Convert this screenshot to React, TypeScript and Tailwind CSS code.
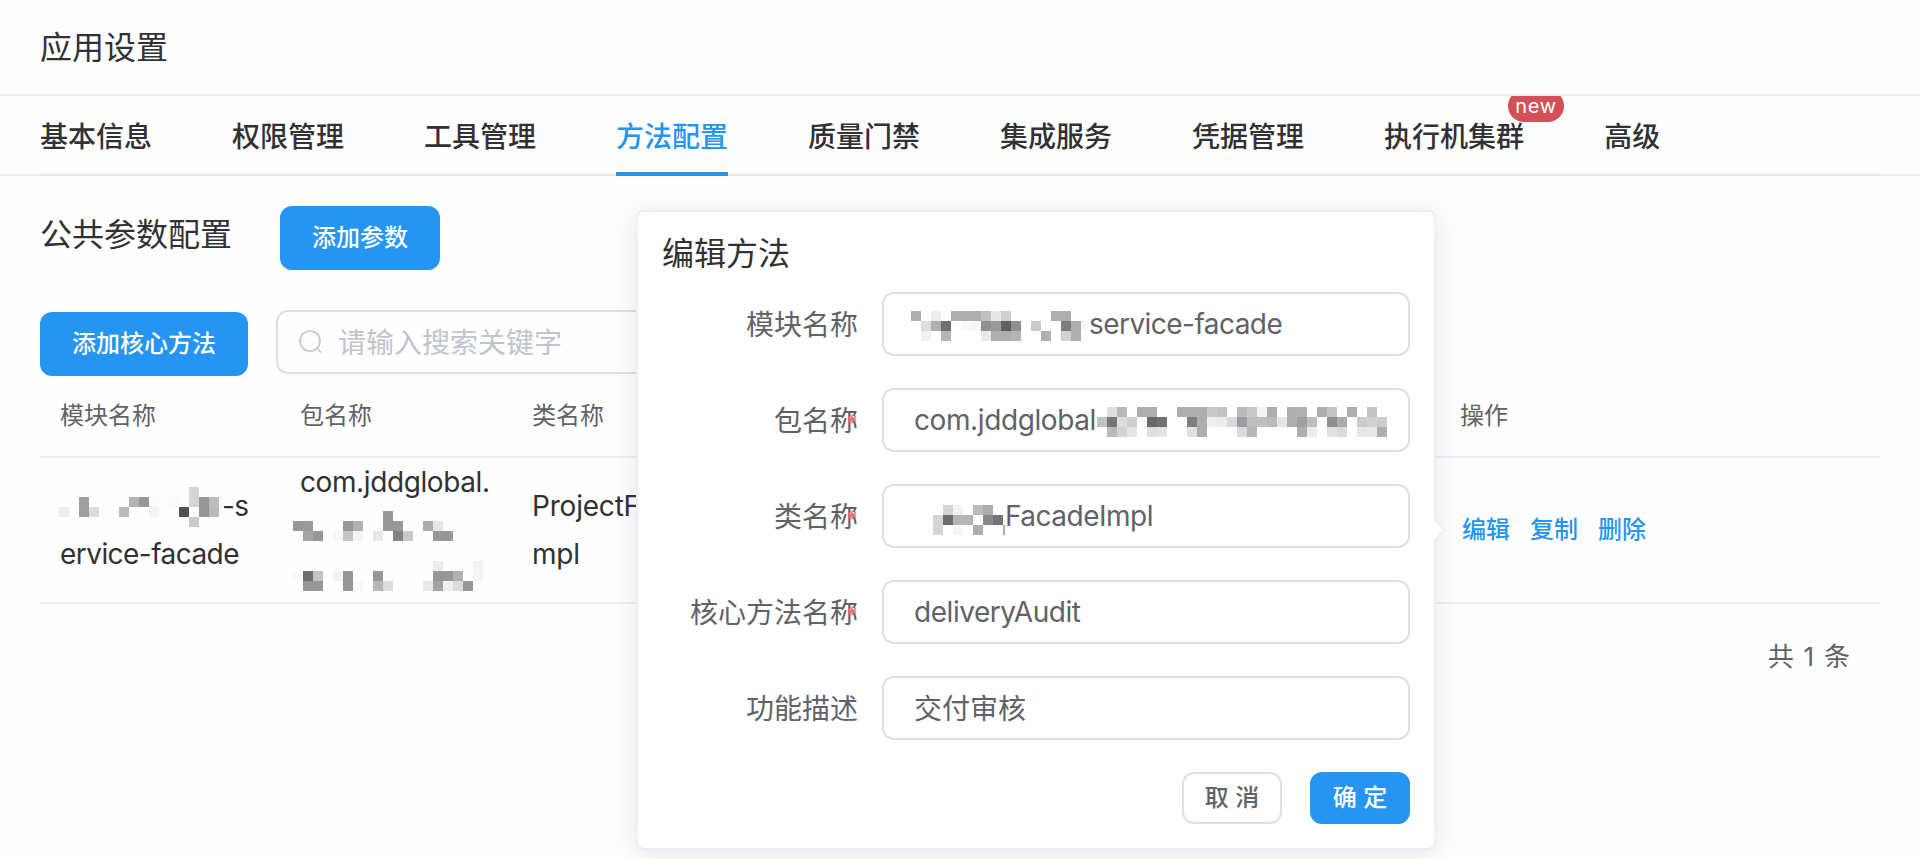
import React from "react";

type Cell = [number, string];

const G = "#aeaeb0";
const D = "#969799";

const moduleMosaic: Cell[][] = [
  [[13, "#d3d6d5"]],
  [[2, "#9fa0a2"], [7, "#b4b4b5"], [8, D], [9, "#fcfcfc"], [11, "#fafafa"], [13, "#d3d6d5"], [14, D], [15, "#bdbdbe"], [16, "#f8f8f8"]],
  [[0, "#eeeeee"], [2, "#9fa0a2"], [3, "#dcdcdd"], [6, "#b9bbba"], [9, "#f5f5f5"], [12, "#4f5052"], [14, D], [15, "#bababb"]],
  [[13, "#cbcbcb"]],
];

const packageMosaic: Cell[][] = [
  [[9, D]],
  [[0, D], [1, "#9b9b9a"], [5, D], [6, "#b1b1b2"], [9, D], [10, D], [13, "#acacad"], [14, "#e6e6e6"], [16, "#fdfdfd"]],
  [[1, "#a3a4a6"], [2, D], [4, "#f7f7f7"], [5, "#c3c3c3"], [6, "#f3f3f3"], [8, "#e8e8e8"], [10, "#808183"], [11, "#c9c9c9"], [14, D], [15, D]],
  [],
  [],
  [[14, "#ececec"], [18, "#f4f4f4"]],
  [[0, "#f9f9f9"], [1, "#6e7072"], [2, "#c4c4c5"], [4, "#f3f3f3"], [5, D], [8, D], [14, D], [15, D], [16, "#b0b0b1"], [18, "#f4f4f4"]],
  [[1, D], [2, D], [5, D], [6, "#f8f8f8"], [8, "#b7b7b8"], [9, "#dcdedd"], [13, "#eaeaea"], [14, "#a3a4a6"], [15, "#f0f0f0"], [16, "#dcdcdd"], [17, D]],
];

const moduleInputMosaic: Cell[][] = [
  [[0, G], [2, "#ecedec"], [4, G], [5, G], [6, G], [7, "#bfc0c1"], [8, "#e8e8e8"], [9, "#cecfd0"], [14, G], [15, G]],
  [[1, "#dedede"], [2, G], [3, "#6f7073"], [5, "#f9f9f9"], [6, "#f6f6f6"], [7, "#909193"], [8, "#98999b"], [9, "#5f6063"], [10, "#8e8f92"], [12, "#cacbcc"], [15, "#7c7d81"], [16, G], [17, "#f6f6f7"]],
  [[1, "#f2f2f2"], [3, "#b5b5b7"], [7, "#eaeaea"], [8, G], [9, G], [10, "#b5b5b7"], [13, G], [15, "#d0d1d3"], [16, G]],
];

const packageInputMosaic: Cell[][] = [
  [[1, "#dedede"], [2, "#b8b8ba"], [4, G], [5, G], [8, G], [9, G], [10, G], [11, "#c8c9ca"], [12, "#c2c2c3"], [14, "#babbbd"], [15, "#c9cacb"], [16, "#f4f4f4"], [17, G], [19, G], [20, "#b1b1b3"], [22, G], [23, "#c4c5c6"], [25, G], [27, "#c2c3c4"]],
  [[0, "#c2c3c4"], [1, "#757679"], [2, "#dcdddd"], [3, "#cfcfd1"], [5, "#67686b"], [6, "#707174"], [9, "#7d7e81"], [10, G], [11, "#efefef"], [12, "#ebecec"], [13, "#d9d9da"], [14, "#9c9da1"], [15, "#bebec0"], [16, "#c0c0c2"], [17, "#babbbc"], [18, "#e4e5e4"], [19, G], [20, "#a0a0a2"], [21, "#bfbfc0"], [23, "#8f8f91"], [24, "#acacae"], [26, "#cbccce"], [27, "#d1d1d3"], [28, "#cbccce"]],
  [[1, "#b9b9bb"], [2, "#d3d3d4"], [3, "#e5e5e5"], [5, "#dfdfdf"], [6, "#e2e3e2"], [9, "#e0e1e1"], [10, G], [14, "#d9dadb"], [15, "#b7b7b9"], [20, G], [21, "#ececec"], [23, "#e0e1e1"], [24, "#dadadb"], [26, "#e6e6e6"], [27, "#e8e9e9"], [28, G]],
];

const classInputMosaic: Cell[][] = [
  [[1, "#d3d4d6"], [2, "#f3f3f3"], [4, "#bcbcbe"], [5, G]],
  [[0, "#d3d4d6"], [1, "#6c6d71"], [2, "#b6b6b8"], [3, "#b5b5b7"], [5, "#88898b"], [6, "#727377"]],
  [[0, "#d3d4d6"], [2, "#f7f7f7"], [4, G], [7, G]],
];

function Mosaic({ rows, width, className }: { rows: Cell[][]; width: number; className?: string }) {
  return (
    <svg width={width} height={rows.length * 10} shapeRendering="crispEdges" className={`block shrink-0 ${className ?? ""}`}>
      {rows.map((row, y) =>
        row.map(([x, fill]) => <rect key={`${x}-${y}`} x={x * 10} y={y * 10} width={10} height={10} fill={fill} />)
      )}
    </svg>
  );
}

const tabs = ["基本信息", "权限管理", "工具管理", "方法配置", "质量门禁", "集成服务", "凭据管理", "执行机集群", "高级"];

function Tabs() {
  return (
    <nav className="h-20 overflow-hidden border-b-2 border-[#eeeeee] px-10">
      <div className="flex h-20 gap-20 text-[28px] leading-[82px] font-medium">
        {tabs.map((tab) => (
          <div key={tab} className={tab === "方法配置" ? "h-20 text-[#2695f1]" : "relative h-20"}>
            {tab}
            {tab === "执行机集群" && (
              <span className="absolute -top-1.5 left-[124px] h-8 w-14 rounded-full bg-[#d44f58] text-center text-[20px] leading-[33px] font-normal tracking-[0.7px] text-white">
                new
              </span>
            )}
          </div>
        ))}
      </div>
    </nav>
  );
}

function Field({ label, required, children }: { label: string; required?: boolean; children: React.ReactNode }) {
  return (
    <div className="flex h-16 items-center">
      <label className="relative h-16 w-[196px] text-right text-[28px] leading-[66px]">
        {label}
        {required && (
          <svg viewBox="0 0 10 10" className="absolute top-[26px] right-[1.5px] h-[10px] w-[10px]" stroke="#f56c6c" strokeWidth="1.4">
            <path d="M5 0.5V9.5M1 2.2L9 7.8M9 2.2L1 7.8M0.6 5H9.4" />
          </svg>
        )}
      </label>
      <div className="ml-6 flex h-16 w-[528px] rounded-xl border-2 border-[#dcdfe6] bg-white pl-[30px] text-[28px] leading-[62px]">
        {children}
      </div>
    </div>
  );
}

function EditPopover() {
  return (
    <section className="absolute top-[210px] left-[636px] h-[640px] w-[800px] rounded-lg border-2 border-[#ebeef5] bg-white pt-[17px] pl-6 text-[#606266] shadow-[0_4px_24px_rgba(0,0,0,0.1)]">
      <svg className="absolute top-[307px] -right-[11px]" width="12" height="22" viewBox="0 0 12 22">
        <path d="M0 0L1 0L11.5 11L1 22H0Z" fill="#fff" />
        <path d="M1 0.5L11.3 11L1 21.5" fill="none" stroke="#ebeef5" strokeWidth="1.3" />
      </svg>
      <h3 className="h-[63px] text-[32px] leading-[50px] text-[#303133]">编辑方法</h3>
      <div className="flex flex-col gap-8">
        <Field label="模块名称">
          <Mosaic rows={moduleInputMosaic} width={177} className="mt-[17px] -ml-[3px]" />
          <span className="ml-[1px] leading-[61px] tracking-[-0.55px]">service-facade</span>
        </Field>
        <Field label="包名称" required>
          <span className="w-[183px] leading-[61px] tracking-[-0.4px] whitespace-nowrap">com.jddglobal</span>
          <Mosaic rows={packageInputMosaic} width={290} className="mt-[17px]" />
        </Field>
        <Field label="类名称" required>
          <Mosaic rows={classInputMosaic} width={72} className="mt-[19px] ml-[19px]" />
          <span className="leading-[61px] tracking-[-0.5px]">FacadeImpl</span>
        </Field>
        <Field label="核心方法名称" required>
          <span className="leading-[61px] tracking-[-0.45px]">deliveryAudit</span>
        </Field>
        <Field label="功能描述">交付审核</Field>
      </div>
      <div className="mt-8 flex justify-end gap-7 pr-6 text-[24px] font-medium [word-spacing:1.5px]">
        <button className="h-[52px] w-[100px] rounded-xl border-2 border-[#dcdfe6] leading-[48px]">取 消</button>
        <button className="h-[52px] w-[100px] rounded-xl bg-[#2695f1] leading-[52px] text-white">确 定</button>
      </div>
    </section>
  );
}

export default function App() {
  return (
    <main className="relative h-[859px] w-[1920px] overflow-hidden bg-[#fefefe] font-['Inter','Noto_Sans_CJK_SC',sans-serif] text-[#303133]">
      <header className="h-24 border-b-2 border-[#ebeef5] pl-10">
        <h1 className="text-[32px] leading-[96px]">应用设置</h1>
      </header>
      <Tabs />
      <div className="mx-10 -mt-0.5 h-0.5 bg-[#e4e7ed]">
        <div className="relative -top-0.5 ml-[576px] h-1 w-28 bg-[#2695f1]" />
      </div>
      <div className="flex h-[94px] items-end px-10">
        <h2 className="w-60 text-[32px] leading-[70px]">公共参数配置</h2>
        <button className="h-16 w-40 rounded-xl bg-[#2695f1] text-[24px] font-medium text-white">添加参数</button>
      </div>
      <div className="flex px-10 pt-10">
        <button className="mt-0.5 h-16 w-52 rounded-xl bg-[#2695f1] text-[24px] font-medium text-white">添加核心方法</button>
        <div className="ml-7 flex h-16 w-[480px] items-center rounded-xl border-2 border-[#dcdfe6] pl-[21px] text-[28px] text-[#c0c4cc]">
          <svg width="24" height="24" viewBox="0 0 24 24" fill="none" stroke="#c0c4cc" strokeWidth="1.6">
            <circle cx="11" cy="11" r="10" />
            <path d="M18.3 18.5L22 22.5" />
          </svg>
          <span className="ml-[15px] pt-0.5">请输入搜索关键字</span>
        </div>
      </div>
      <section className="mx-10">
        <div className="grid h-[82px] grid-cols-[240px_232px_930px_1fr] border-b-2 border-[#ebeef5] text-[24px] leading-[80px] text-[#606266]">
          <span className="pl-5">模块名称</span>
          <span className="pl-5">包名称</span>
          <span className="pl-5">类名称</span>
          <span className="pl-[18px]">操作</span>
        </div>
        <div className="grid h-[146px] grid-cols-[240px_232px_930px_1fr] items-center border-b-2 border-[#ebeef5] text-[28px] leading-[48px] tracking-[-0.4px]">
          <div className="pl-5 tracking-[-0.55px]">
            <div className="flex">
              <Mosaic rows={moduleMosaic} width={163} className="mt-[5px] -ml-px" />
              <span>-s</span>
            </div>
            ervice-facade
          </div>
          <div className="h-36 pl-5">
            com.jddglobal.
            <Mosaic rows={packageMosaic} width={190} className="mt-[5px] -ml-[7px]" />
          </div>
          <div className="pl-5 tracking-[-0.2px]">
            ProjectFacadeI
            <br />
            mpl
          </div>
          <div className="flex gap-5 pl-5 text-[24px] font-medium tracking-normal text-[#2695f1]">
            <a>编辑</a>
            <a>复制</a>
            <a>删除</a>
          </div>
        </div>
        <div className="pt-[29px] pr-[30px] text-right text-[26px] leading-[48px] text-[#606266] [word-spacing:2.5px]">共 1 条</div>
      </section>
      <EditPopover />
    </main>
  );
}
